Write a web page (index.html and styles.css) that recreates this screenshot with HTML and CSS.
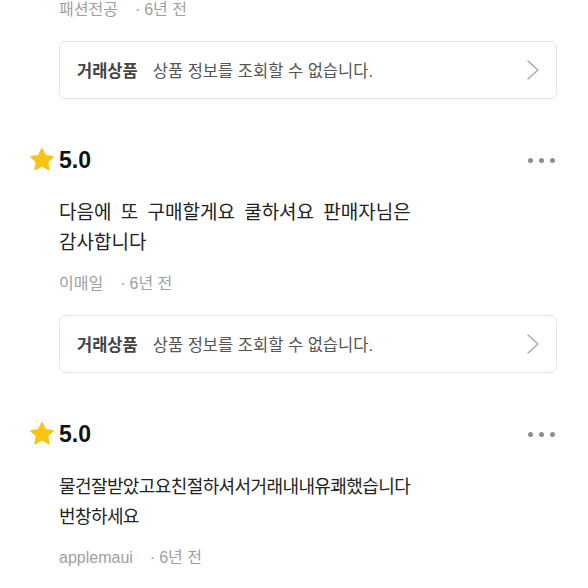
FILE: index.html
```html
<!DOCTYPE html>
<html lang="ko">
<head>
    <meta charset="UTF-8">
    <meta name="viewport" content="width=device-width, initial-scale=1.0">
    <title>거래 후기</title>
    <link rel="stylesheet" href="styles.css">
</head>
<body>
    <div class="reviews">
        <div class="review review-partial">
            <p class="meta">패션전공<span class="date"><span class="dot">·</span>6년 전</span></p>
            <a class="product-card" href="#">
                <strong>거래상품</strong>
                <span class="product-info">상품 정보를 조회할 수 없습니다.</span>
                <svg class="chevron" viewBox="0 0 12 20" width="12" height="20"><path d="M1 1l10 9-10 9" fill="none" stroke="#a8a8a8" stroke-width="1.4" stroke-linecap="round" stroke-linejoin="round"/></svg>
            </a>
        </div>

        <div class="review">
            <div class="review-head">
                <svg class="star" viewBox="0 0 24 24" width="26" height="26"><path d="M12 1.8l3.1 6.4 7 .8-5.2 4.8 1.4 7L12 17.3l-6.3 3.5 1.4-7L1.9 9l7-.8z" fill="#f8c514" stroke="#f8c514" stroke-width="1.6" stroke-linejoin="round"/></svg>
                <span class="score">5.0</span>
                <span class="more"><i></i><i></i><i></i></span>
            </div>
            <p class="review-text">다음에 또 구매할게요 쿨하셔요 판매자님은<br>감사합니다</p>
            <p class="meta">이매일<span class="date"><span class="dot">·</span>6년 전</span></p>
            <a class="product-card" href="#">
                <strong>거래상품</strong>
                <span class="product-info">상품 정보를 조회할 수 없습니다.</span>
                <svg class="chevron" viewBox="0 0 12 20" width="12" height="20"><path d="M1 1l10 9-10 9" fill="none" stroke="#a8a8a8" stroke-width="1.4" stroke-linecap="round" stroke-linejoin="round"/></svg>
            </a>
        </div>

        <div class="review">
            <div class="review-head">
                <svg class="star" viewBox="0 0 24 24" width="26" height="26"><path d="M12 1.8l3.1 6.4 7 .8-5.2 4.8 1.4 7L12 17.3l-6.3 3.5 1.4-7L1.9 9l7-.8z" fill="#f8c514" stroke="#f8c514" stroke-width="1.6" stroke-linejoin="round"/></svg>
                <span class="score">5.0</span>
                <span class="more"><i></i><i></i><i></i></span>
            </div>
            <p class="review-text review-text-tight">물건잘받았고요친절하셔서거래내내유쾌했습니다<br>번창하세요</p>
            <p class="meta">applemaui<span class="date"><span class="dot">·</span>6년 전</span></p>
        </div>
    </div>
</body>
</html>
```

FILE: styles.css
```css
body {
    margin: 0;
    background: #fff;
    font-family: "Liberation Sans", "Noto Sans CJK KR", sans-serif;
    color: #222;
}

.reviews {
    margin-top: -2px;
    padding: 0 31px 0 29px;
}

.review-head {
    display: flex;
    align-items: center;
    height: 30px;
    margin-top: 46px;
}

.star {
    display: block;
    margin-right: 4px;
}

.score {
    font-size: 23px;
    font-weight: bold;
    color: #111;
}

.more {
    margin-left: auto;
    display: flex;
    gap: 6px;
    padding-right: 2px;
}

.more i {
    display: block;
    width: 5px;
    height: 5px;
    border-radius: 50%;
    background: #8e8e8e;
}

.review-text {
    margin: 23px 0 0 30px;
    font-size: 19px;
    line-height: 30px;
    word-spacing: 4px;
    color: #222;
}

.review-text-tight {
    font-size: 18px;
    letter-spacing: -0.6px;
}

.meta {
    margin: 14px 0 0 30px;
    font-size: 16px;
    line-height: 24px;
    color: #a0a0a0;
}

.review-partial .meta {
    margin-top: 0;
}

.meta .date {
    margin-left: 17px;
}

.meta .dot {
    margin-right: 4px;
}

.product-card {
    display: flex;
    align-items: center;
    height: 56px;
    margin: 19px 0 0 30px;
    padding: 0 17px;
    border: 1px solid #e4e4e4;
    border-radius: 6px;
    text-decoration: none;
    font-size: 16.5px;
    color: #555;
}

.product-card strong {
    color: #444;
    margin-right: 15px;
}

.chevron {
    margin-left: auto;
}
```
